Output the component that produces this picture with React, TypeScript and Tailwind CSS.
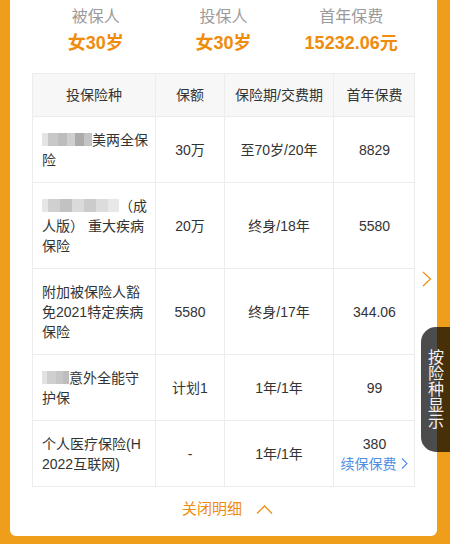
import React from "react";

const font = { fontFamily: '"Liberation Sans", "Noto Sans CJK SC", sans-serif' };

function Mosaic({ blocks }: { blocks: { w: number; c: string }[] }) {
  return (
    <span className="inline-flex h-[13px] align-[-1px] blur-[0.6px]">
      {blocks.map((b, i) => (
        <span key={i} className="h-full" style={{ width: b.w, background: b.c }} />
      ))}
    </span>
  );
}

const rows: {
  name: React.ReactNode;
  amount: string;
  period: string;
  fee: React.ReactNode;
}[] = [
  {
    name: (
      <>
        <span className="block whitespace-nowrap">
          <Mosaic
            blocks={[
              { w: 6, c: "#e4e4e4" },
              { w: 10, c: "#c8c8c8" },
              { w: 9, c: "#bdbdbd" },
              { w: 8, c: "#cfcfcf" },
              { w: 9, c: "#ababab" },
              { w: 8, c: "#c4c4c4" },
            ]}
          />
          美两全保
        </span>
        <span className="block">险</span>
      </>
    ),
    amount: "30万",
    period: "至70岁/20年",
    fee: "8829",
  },
  {
    name: (
      <>
        <span className="block whitespace-nowrap">
          <Mosaic
            blocks={[
              { w: 6, c: "#e6e6e6" },
              { w: 12, c: "#d0d0d0" },
              { w: 12, c: "#c2c2c2" },
              { w: 12, c: "#dadada" },
              { w: 12, c: "#cbcbcb" },
              { w: 12, c: "#dcdcdc" },
              { w: 11, c: "#e8e8e8" },
            ]}
          />
          （成
        </span>
        <span className="block whitespace-nowrap">人版） 重大疾病</span>
        <span className="block">保险</span>
      </>
    ),
    amount: "20万",
    period: "终身/18年",
    fee: "5580",
  },
  {
    name: (
      <>
        <span className="block whitespace-nowrap">附加被保险人豁</span>
        <span className="block whitespace-nowrap">免2021特定疾病</span>
        <span className="block">保险</span>
      </>
    ),
    amount: "5580",
    period: "终身/17年",
    fee: "344.06",
  },
  {
    name: (
      <>
        <span className="block whitespace-nowrap">
          <Mosaic
            blocks={[
              { w: 5, c: "#e2e2e2" },
              { w: 9, c: "#cfcfcf" },
              { w: 7, c: "#c6c6c6" },
              { w: 6, c: "#bdbdbd" },
            ]}
          />
          意外全能守
        </span>
        <span className="block">护保</span>
      </>
    ),
    amount: "计划1",
    period: "1年/1年",
    fee: "99",
  },
  {
    name: (
      <>
        <span className="block whitespace-nowrap">个人医疗保险(H</span>
        <span className="block whitespace-nowrap">2022互联网)</span>
      </>
    ),
    amount: "-",
    period: "1年/1年",
    fee: (
      <div className="flex flex-col items-center">
        <span>380</span>
        <span className="flex items-center text-[#4f8fe6]">
          续保保费
          <svg width="9" height="13" viewBox="0 0 9 13" className="ml-[3px]">
            <path d="M2 1.5 L7 6.5 L2 11.5" fill="none" stroke="#4f8fe6" strokeWidth="1.1" />
          </svg>
        </span>
      </div>
    ),
  },
];

export default function App() {
  return (
    <div className="relative h-[544px] w-[450px] overflow-hidden bg-[#ee9e1b]" style={font}>
      <div className="ml-[10px] flex h-[536px] w-[427px] flex-col rounded-b-[6px] bg-white">
        <div className="mx-[22px] grid grid-cols-3 pt-[7px]">
          {[
            ["被保人", "女30岁"],
            ["投保人", "女30岁"],
            ["首年保费", "15232.06元"],
          ].map(([l, v]) => (
            <div key={l} className="flex flex-col items-center">
              <span className="text-[16px] leading-[20px] text-[#9a9a9a]">{l}</span>
              <span className="mt-[4px] text-[18px] font-bold leading-[24px] text-[#ef8c0c]">{v}</span>
            </div>
          ))}
        </div>
        <div className="mx-[22px] mt-[18px] border-x border-[#ececec] text-[14px] leading-[20px] text-[#333]">
          <div className="grid grid-cols-[122px_69px_109px_82px] border-y border-[#ececec] bg-[#f7f7f7]">
            <div className="py-[11px] text-center">投保险种</div>
            <div className="border-l border-[#ececec] py-[11px] text-center">保额</div>
            <div className="border-l border-[#ececec] py-[11px] text-center whitespace-nowrap">保险期/交费期</div>
            <div className="border-l border-[#ececec] py-[11px] text-center">首年保费</div>
          </div>
          {rows.map((r, i) => (
            <div key={i} className="grid grid-cols-[122px_69px_109px_82px] border-b border-[#ececec]">
              <div className="py-[12.5px] pl-[9px] pr-[4px]">{r.name}</div>
              <div className="flex items-center justify-center border-l border-[#ececec]">{r.amount}</div>
              <div className="flex items-center justify-center border-l border-[#ececec]">{r.period}</div>
              <div className="flex items-center justify-center border-l border-[#ececec]">{r.fee}</div>
            </div>
          ))}
        </div>
        <div className="flex flex-1 items-center justify-center pl-[8px] pb-[4px] text-[15px] text-[#ef8c0c]">
          <span>关闭明细</span>
          <svg width="17" height="9" viewBox="0 0 17 9" className="ml-[14px]">
            <path d="M1 8.5 L8.5 1 L16 8.5" fill="none" stroke="#ef8c0c" strokeWidth="1.3" />
          </svg>
        </div>
      </div>

      <svg width="10" height="16" viewBox="0 0 10 16" className="absolute left-[422px] top-[271px]">
        <path d="M1 1 L8.5 8 L1 15" fill="none" stroke="#ef8c0c" strokeWidth="1.2" />
      </svg>

      <div className="absolute right-0 top-[327px] flex h-[125px] w-[29px] flex-col items-center justify-center rounded-l-[15px] bg-black/70 pl-[1px] text-[16px] leading-[16px] text-[#f2f2f2]">
        {"按险种显示".split("").map((c) => (
          <span key={c}>{c}</span>
        ))}
      </div>
    </div>
  );
}
